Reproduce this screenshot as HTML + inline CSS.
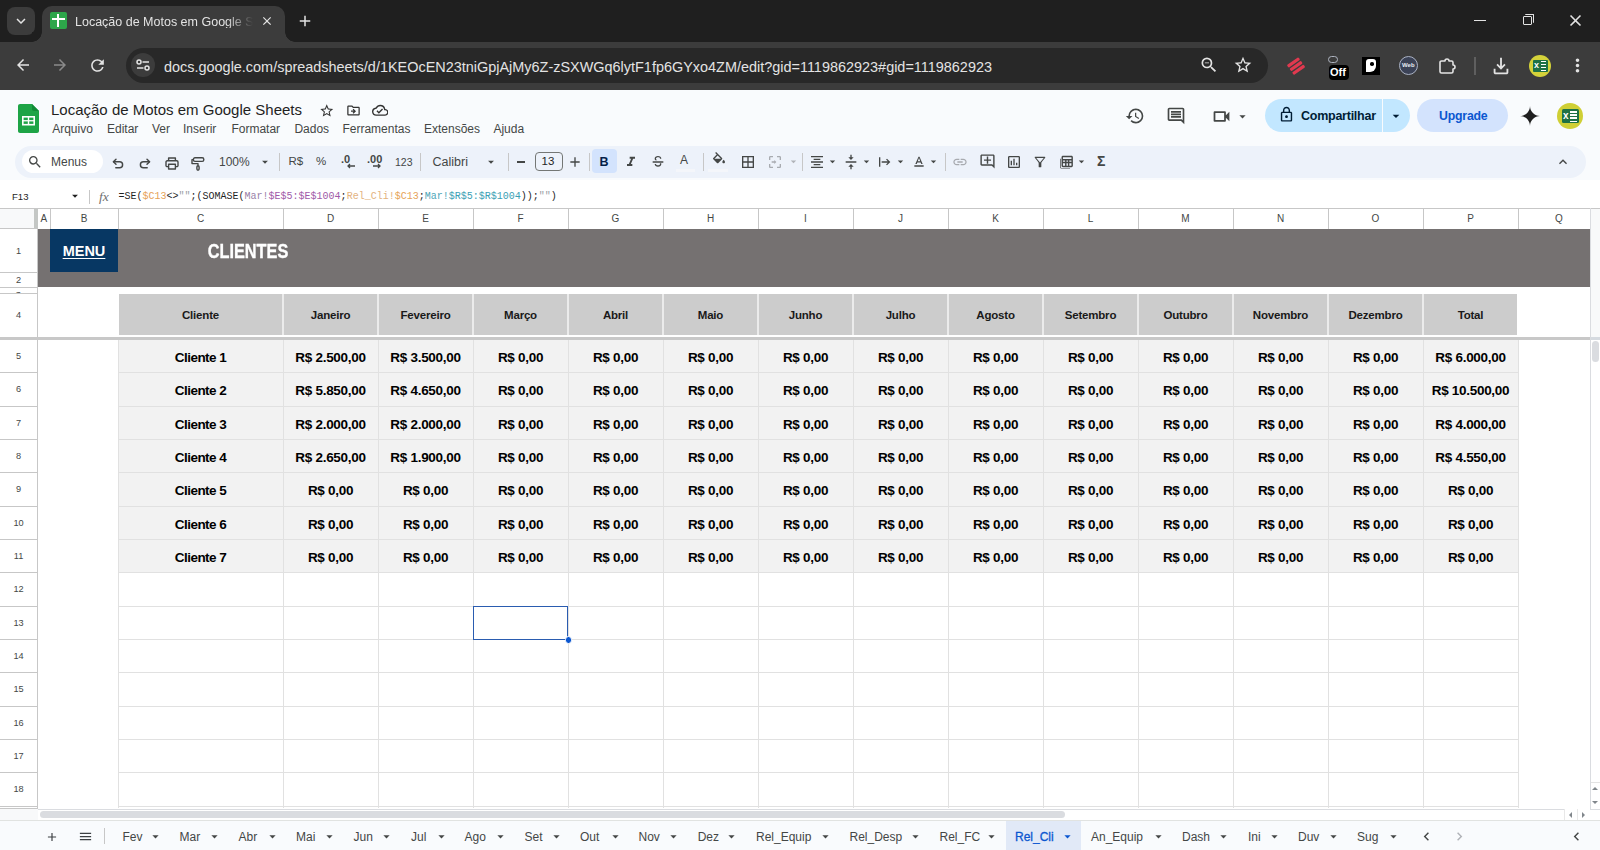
<!DOCTYPE html>
<html><head><meta charset="utf-8"><title>Locação de Motos em Google Sheets</title>
<style>
*{margin:0;padding:0;box-sizing:border-box}
html,body{width:1600px;height:850px;overflow:hidden;background:#fff;font-family:"Liberation Sans",sans-serif}
.t{position:absolute;white-space:nowrap;line-height:1}
.b{position:absolute}
svg{position:absolute;display:block}
.mono{font-family:"Liberation Mono",monospace}
</style></head><body>

<div class="b" style="left:0px;top:0px;width:1600px;height:42px;background:#1f1f1f"></div>
<div class="b" style="left:7px;top:7px;width:28px;height:28px;background:#3c3c3c;border-radius:8px"></div>
<svg style="position:absolute;left:12px;top:12px;width:18px;height:18px" viewBox="0 0 24 24"><path fill="#e3e3e3" d="M16.59 8.59L12 13.17 7.41 8.59 6 10l6 6 6-6z"/></svg>
<div class="b" style="left:42px;top:6px;width:243px;height:40px;background:#3c3c3c;border-radius:10px 10px 0 0"></div>
<div class="b" style="left:32px;top:32px;width:10px;height:10px;background:radial-gradient(circle at 0 0,#1f1f1f 9.5px,#3c3c3c 10px)"></div>
<div class="b" style="left:285px;top:32px;width:10px;height:10px;background:radial-gradient(circle at 100% 0,#1f1f1f 9.5px,#3c3c3c 10px)"></div>
<div class="b" style="left:50px;top:12px;width:17px;height:17px;background:#2da64a;border-radius:2px"></div>
<div class="b" style="left:57px;top:14px;width:2.2px;height:13px;background:#fff"></div>
<div class="b" style="left:52px;top:18px;width:13px;height:2.2px;background:#fff"></div>
<div class="t" style="left:75px;top:15.5px;font-size:12.5px;color:#e3e3e3;width:178px;overflow:hidden;-webkit-mask-image:linear-gradient(90deg,#000 85%,transparent)">Locação de Motos em Google Sheets</div>
<svg style="position:absolute;left:259.8px;top:14px;width:14px;height:14px" viewBox="0 0 24 24"><path fill="#e3e3e3" d="M19 6.41L17.59 5 12 10.59 6.41 5 5 6.41 10.59 12 5 17.59 6.41 19 12 13.59 17.59 19 19 17.59 13.41 12z"/></svg>
<svg style="position:absolute;left:296px;top:12px;width:18px;height:18px" viewBox="0 0 24 24"><path fill="#e3e3e3" d="M19 13h-6v6h-2v-6H5v-2h6V5h2v6h6v2z"/></svg>
<div class="b" style="left:1474px;top:20px;width:12px;height:1.3px;background:#e3e3e3"></div>
<div class="b" style="left:1523px;top:16px;width:9px;height:9px;border:1.2px solid #e3e3e3;border-radius:1px"></div>
<div class="b" style="left:1525px;top:14px;width:9px;height:9px;border-top:1.2px solid #e3e3e3;border-right:1.2px solid #e3e3e3;border-radius:1px"></div>
<svg style="position:absolute;left:1566px;top:11px;width:19px;height:19px" viewBox="0 0 24 24"><path fill="#e3e3e3" d="M19 6.41L17.59 5 12 10.59 6.41 5 5 6.41 10.59 12 5 17.59 6.41 19 12 13.59 17.59 19 19 17.59 13.41 12z"/></svg>
<div class="b" style="left:0px;top:42px;width:1600px;height:48px;background:#3c3c3c"></div>
<svg style="position:absolute;left:14px;top:56px;width:18px;height:18px" viewBox="0 0 24 24"><path fill="#e3e3e3" d="M20 11H7.83l5.59-5.59L12 4l-8 8 8 8 1.41-1.41L7.830 13H20v-2z"/></svg>
<svg style="position:absolute;left:51px;top:56px;width:18px;height:18px" viewBox="0 0 24 24"><path fill="#8a8a8a" d="M12 4l-1.41 1.41L16.17 11H4v2h12.17l-5.58 5.59L12 20l8-8z"/></svg>
<svg style="position:absolute;left:88px;top:56px;width:19px;height:19px" viewBox="0 0 24 24"><path fill="#e3e3e3" d="M17.65 6.35A7.958 7.958 0 0 0 12 4c-4.42 0-7.99 3.58-7.99 8s3.57 8 7.99 8c3.73 0 6.84-2.55 7.73-6h-2.08A5.99 5.99 0 0 1 12 18c-3.31 0-6-2.69-6-6s2.69-6 6-6c1.66 0 3.14.69 4.22 1.78L13 11h7V4l-2.35 2.35z"/></svg>
<div class="b" style="left:126px;top:48px;width:1142px;height:35px;background:#282828;border-radius:18px"></div>
<div class="b" style="left:131px;top:53px;width:24px;height:24px;background:#3c3c3c;border-radius:12px"></div>
<svg style="left:135px;top:57px;width:16px;height:16px" viewBox="0 0 16 16"><g stroke="#e3e3e3" stroke-width="1.5" fill="none"><circle cx="4" cy="5" r="2"/><path d="M7.5 5h6.5M2 11h6.5"/><circle cx="12" cy="11" r="2"/></g></svg>
<div class="t" style="left:164px;top:59.5px;font-size:14.45px;color:#e3e3e3">docs.google.com/spreadsheets/d/1KEOcEN23tniGpjAjMy6Z-zSXWGq6lytF1fp6GYxo4ZM/edit?gid=1119862923#gid=1119862923</div>
<svg style="position:absolute;left:1199px;top:55px;width:20px;height:20px" viewBox="0 0 24 24"><path fill="#e3e3e3" d="M15.5 14h-.79l-.28-.27A6.471 6.471 0 0 0 16 9.5 6.5 6.5 0 1 0 9.5 16c1.61 0 3.09-.59 4.23-1.57l.27.28v.79l5 4.99L20.49 19l-4.99-5zm-6 0C7.01 14 5 11.99 5 9.5S7.01 5 9.5 5 14 7.01 14 9.5 11.99 14 9.5 14zM7 9h5v1H7z"/></svg>
<svg style="position:absolute;left:1233px;top:55px;width:20px;height:20px" viewBox="0 0 24 24"><path fill="#e3e3e3" d="M22 9.24l-7.19-.62L12 2 9.19 8.63 2 9.24l5.46 4.73L5.82 21 12 17.270 18.18 21l-1.63-7.03L22 9.24zM12 15.4l-3.76 2.27 1-4.28-3.32-2.88 4.38-.38L12 6.1l1.71 4.04 4.38.38-3.32 2.88 1 4.28L12 15.4z"/></svg>
<svg style="left:1286px;top:56px;width:20px;height:20px" viewBox="0 0 20 20"><g fill="#e0394f" transform="rotate(-35 10 10)"><rect x="3" y="4" width="14" height="3.2" rx="1"/><rect x="3" y="8.5" width="14" height="3.2" rx="1"/><rect x="3" y="13" width="14" height="3.2" rx="1"/></g></svg>
<div class="b" style="left:1328px;top:56px;width:10px;height:7px;border:1.3px solid #aeb4c0;border-radius:4px"></div>
<div class="b" style="left:1329px;top:65px;width:20px;height:15px;background:#000;border-radius:4px"></div>
<div class="t" style="left:1330px;top:67px;font-size:11px;font-weight:bold;color:#fff">Off</div>
<div class="b" style="left:1362px;top:57px;width:18px;height:18px;background:#000"></div>
<div class="b" style="left:1366px;top:59px;width:10px;height:13px;background:#fff;border-radius:3px 3px 6px 0"></div>
<div class="b" style="left:1370px;top:62px;width:3.5px;height:3.5px;background:#000;border-radius:50%"></div>
<div class="b" style="left:1399px;top:56px;width:19px;height:19px;border-radius:50%;background:#3b4256;border:1.5px solid #aab2c4"></div>
<div class="t" style="left:1402px;top:61.5px;font-size:6px;font-weight:bold;color:#e8ecf4">Web</div>
<svg style="left:1437px;top:56px;width:20px;height:20px" viewBox="0 0 20 20"><path d="M3 6.5a1.5 1.5 0 0 1 1.5-1.5H8a2 2 0 0 1 4 0H14.5a1.5 1.5 0 0 1 1.5 1.5V9a2 2 0 0 1 0 4V15.5a1.5 1.5 0 0 1-1.5 1.5H4.5A1.5 1.5 0 0 1 3 15.5z" stroke="#e3e3e3" stroke-width="1.6" fill="none" stroke-linejoin="round"/></svg>
<div class="b" style="left:1474px;top:57px;width:1.5px;height:18px;background:#5f5f5f"></div>
<svg style="position:absolute;left:1490px;top:55px;width:22px;height:22px" viewBox="0 0 24 24"><path fill="#e3e3e3" d="M12 16l-5-5 1.41-1.41L11 12.17V3h2v9.17l2.59-2.58L17 11l-5 5zM4 15h2v4h12v-4h2v4c0 1.1-.9 2-2 2H6c-1.1 0-2-.9-2-2v-4z"/></svg>
<div class="b" style="left:1529px;top:55px;width:22px;height:22px;border-radius:50%;background:#d4d23a"></div>
<div class="b" style="left:1533px;top:60px;width:15px;height:12px;background:#1e7145;border-radius:1px"></div>
<div class="t" style="left:1534px;top:61px;font-size:9px;font-weight:bold;color:#fff">x</div>
<div class="b" style="left:1541px;top:61px;width:5px;height:10px;background:repeating-linear-gradient(#fff 0 1.5px,#1e7145 1.5px 3px)"></div>
<svg style="position:absolute;left:1566.5px;top:54.5px;width:21px;height:21px" viewBox="0 0 24 24"><path fill="#e3e3e3" d="M12 8c1.1 0 2-.9 2-2s-.9-2-2-2-2 .9-2 2 .9 2 2 2zm0 2c-1.1 0-2 .9-2 2s.9 2 2 2 2-.9 2-2-.9-2-2-2zm0 6c-1.1 0-2 .9-2 2s.9 2 2 2 2-.9 2-2-.9-2-2-2z"/></svg>
<div class="b" style="left:0px;top:90px;width:1600px;height:118px;background:#f9fbfd"></div>
<svg style="left:18px;top:104px;width:21px;height:29px" viewBox="0 0 21 29"><path fill="#1ea446" d="M2 0h12l7 7v20c0 1.1-.9 2-2 2H2c-1.1 0-2-.9-2-2V2C0 .9.9 0 2 0z"/><path fill="#118a37" d="M14 0l7 7h-5c-1.1 0-2-.9-2-2z"/><rect x="4" y="12" width="13" height="9.5" fill="#fff"/><rect x="5.6" y="13.6" width="4.2" height="2.5" fill="#1ea446"/><rect x="11.2" y="13.6" width="4.2" height="2.5" fill="#1ea446"/><rect x="5.6" y="17.4" width="4.2" height="2.5" fill="#1ea446"/><rect x="11.2" y="17.4" width="4.2" height="2.5" fill="#1ea446"/></svg>
<div class="t" style="left:51px;top:101.5px;font-size:15px;color:#1f1f1f">Locação de Motos em Google Sheets</div>
<svg style="position:absolute;left:318.5px;top:102.5px;width:15.5px;height:15.5px" viewBox="0 0 24 24"><path fill="#333" d="M22 9.24l-7.19-.62L12 2 9.19 8.63 2 9.24l5.46 4.73L5.82 21 12 17.270 18.18 21l-1.63-7.03L22 9.24zM12 15.4l-3.76 2.27 1-4.28-3.32-2.88 4.38-.38L12 6.1l1.71 4.04 4.38.38-3.32 2.88 1 4.28L12 15.4z"/></svg>
<svg style="position:absolute;left:345.5px;top:102.5px;width:15px;height:15px" viewBox="0 0 24 24"><path fill="#333" d="M20 6h-8l-2-2H4c-1.1 0-1.99.9-1.99 2L2 18c0 1.1.9 2 2 2h16c1.1 0 2-.9 2-2V8c0-1.1-.9-2-2-2zm0 12H4V6h5.17l2 2H20v10zm-7.84-6H8v2h4.16l-1.59 1.59L11.99 17 16 13.01 11.99 9l-1.41 1.41L12.16 12z"/></svg>
<svg style="position:absolute;left:371.5px;top:102px;width:16.5px;height:16.5px" viewBox="0 0 24 24"><path fill="#333" d="M19.35 10.04A7.49 7.49 0 0 0 12 4C9.11 4 6.6 5.64 5.35 8.04A5.994 5.994 0 0 0 0 14c0 3.31 2.69 6 6 6h13c2.76 0 5-2.24 5-5 0-2.64-2.05-4.78-4.65-4.96zM19 18H6c-2.21 0-4-1.79-4-4 0-2.05 1.53-3.76 3.56-3.97l1.07-.11.5-.95A5.469 5.469 0 0 1 12 6c2.62 0 4.88 1.86 5.39 4.43l.3 1.5 1.53.11A2.98 2.98 0 0 1 22 15c0 1.65-1.35 3-3 3zm-9-3.82l-2.09-2.09L6.5 13.5 10 17l6.01-6.01-1.41-1.41z"/></svg>
<div class="t " style="left:52.2px;top:123px;font-size:12px;color:#444746">Arquivo</div>
<div class="t " style="left:107px;top:123px;font-size:12px;color:#444746">Editar</div>
<div class="t " style="left:152px;top:123px;font-size:12px;color:#444746">Ver</div>
<div class="t " style="left:183px;top:123px;font-size:12px;color:#444746">Inserir</div>
<div class="t " style="left:231.4px;top:123px;font-size:12px;color:#444746">Formatar</div>
<div class="t " style="left:294.4px;top:123px;font-size:12px;color:#444746">Dados</div>
<div class="t " style="left:342.4px;top:123px;font-size:12px;color:#444746">Ferramentas</div>
<div class="t " style="left:424px;top:123px;font-size:12px;color:#444746">Extensões</div>
<div class="t " style="left:493.4px;top:123px;font-size:12px;color:#444746">Ajuda</div>
<svg style="position:absolute;left:1125px;top:106px;width:20px;height:20px" viewBox="0 0 24 24"><path fill="#444746" d="M13 3a9 9 0 0 0-9 9H1l3.89 3.89.07.14L9 12H6c0-3.87 3.13-7 7-7s7 3.13 7 7-3.13 7-7 7c-1.930 0-3.68-.79-4.94-2.06l-1.42 1.42A8.954 8.954 0 0 0 13 21a9 9 0 0 0 0-18zm-1 5v5l4.28 2.54.72-1.21-3.5-2.08V8H12z"/></svg>
<svg style="position:absolute;left:1166px;top:106px;width:20px;height:20px" viewBox="0 0 24 24"><path fill="#444746" d="M21.99 4c0-1.1-.89-2-1.99-2H4c-1.1 0-2 .9-2 2v12c0 1.1.9 2 2 2h14l4 4-.01-18zM20 4v13.17L18.83 16H4V4h16zM6 12h12v2H6zm0-3h12v2H6zm0-3h12v2H6z"/></svg>
<svg style="position:absolute;left:1211px;top:106px;width:21px;height:21px" viewBox="0 0 24 24"><path fill="#444746" d="M15 8v8H5V8h10m1-2H4c-.55 0-1 .45-1 1v10c0 .55.45 1 1 1h12c.55 0 1-.45 1-1v-3.5l4 4v-11l-4 4V7c0-.55-.45-1-1-1z"/></svg>
<svg style="position:absolute;left:1235px;top:109px;width:15px;height:15px" viewBox="0 0 24 24"><path fill="#444746" d="M7 10l5 5 5-5z"/></svg>
<div class="b" style="left:1265px;top:99px;width:145.3px;height:33px;background:#c2e7ff;border-radius:17px"></div>
<div class="b" style="left:1382px;top:99px;width:1px;height:33px;background:#f9fbfd"></div>
<svg style="position:absolute;left:1278px;top:106px;width:17px;height:17px" viewBox="0 0 24 24"><path fill="#001d35" d="M18 8h-1V6c0-2.76-2.24-5-5-5S7 3.24 7 6v2H6c-1.1 0-2 .9-2 2v10c0 1.1.9 2 2 2h12c1.1 0 2-.9 2-2V10c0-1.1-.9-2-2-2zM9 6c0-1.66 1.34-3 3-3s3 1.34 3 3v2H9V6zm9 14H6V10h12v10zm-6-3c1.1 0 2-.9 2-2s-.9-2-2-2-2 .9-2 2 .9 2 2 2z"/></svg>
<div class="t " style="left:1301px;top:109.5px;font-size:12.5px;color:#001d35;font-weight:bold;letter-spacing:-0.25px">Compartilhar</div>
<svg style="position:absolute;left:1388px;top:108px;width:16px;height:16px" viewBox="0 0 24 24"><path fill="#001d35" d="M7 10l5 5 5-5z"/></svg>
<div class="b" style="left:1417px;top:99px;width:90.8px;height:33px;background:#d3e3fd;border-radius:17px"></div>
<div class="t " style="left:1439px;top:109.5px;font-size:12.3px;color:#0b57d0;font-weight:bold;letter-spacing:-0.2px">Upgrade</div>
<svg style="position:absolute;left:1518px;top:104px;width:24px;height:24px" viewBox="0 0 24 24"><path fill="#1f1f1f" d="M12 2C12 7.5 16.5 12 22 12 16.5 12 12 16.5 12 22 12 16.5 7.5 12 2 12 7.5 12 12 7.5 12 2z"/></svg>
<div class="b" style="left:1557px;top:103px;width:26px;height:26px;border-radius:50%;background:#cfcf35"></div>
<div class="b" style="left:1561.5px;top:109px;width:17px;height:14px;background:#1e7145;border-radius:1.5px"></div>
<div class="t" style="left:1563px;top:111px;font-size:10px;font-weight:bold;color:#fff">x</div>
<div class="b" style="left:1570px;top:110.5px;width:6.5px;height:11px;background:repeating-linear-gradient(#fff 0 1.6px,#1e7145 1.6px 3.2px)"></div>
<div class="b" style="left:15px;top:146px;width:1571px;height:31.5px;background:#edf2fa;border-radius:16px"></div>
<div class="b" style="left:21.6px;top:150.3px;width:81.4px;height:22.5px;background:#fff;border-radius:12px"></div>
<svg style="position:absolute;left:27px;top:154px;width:16px;height:16px" viewBox="0 0 24 24"><path fill="#444746" d="M15.5 14h-.79l-.28-.27A6.471 6.471 0 0 0 16 9.5 6.5 6.5 0 1 0 9.5 16c1.61 0 3.09-.59 4.23-1.57l.27.28v.79l5 4.99L20.49 19l-4.99-5zm-6 0C7.01 14 5 11.99 5 9.5S7.01 5 9.5 5 14 7.01 14 9.5 11.99 14 9.5 14z"/></svg>
<div class="t " style="left:51px;top:155.5px;font-size:12px;color:#444746">Menus</div>
<svg style="left:112px;top:157.5px;width:12px;height:11px" viewBox="0 0 12 11"><g stroke="#444746" stroke-width="1.45" fill="none" stroke-linecap="round" stroke-linejoin="round"><path d="M4 1.2L1.4 3.7 4 6.2"/><path d="M1.6 3.7H7.6a3 3 0 0 1 0 6H3.8"/></g></svg>
<svg style="left:139px;top:157.5px;width:12px;height:11px" viewBox="0 0 12 11"><g stroke="#444746" stroke-width="1.45" fill="none" stroke-linecap="round" stroke-linejoin="round"><path d="M8 1.2L10.6 3.7 8 6.2"/><path d="M10.4 3.7H4.4a3 3 0 0 0 0 6H8.2"/></g></svg>
<svg style="left:164.5px;top:156.5px;width:14px;height:13px" viewBox="0 0 14 13"><g stroke="#444746" stroke-width="1.4" fill="none" stroke-linejoin="round"><path d="M3.6 3.8V1H10.4V3.8"/><path d="M3.4 9.6H2.2A1.2 1.2 0 0 1 1 8.4V5A1.2 1.2 0 0 1 2.2 3.8H11.8A1.2 1.2 0 0 1 13 5V8.4A1.2 1.2 0 0 1 11.8 9.6H10.6"/><rect x="3.6" y="7.2" width="6.8" height="4.8"/></g></svg>
<svg style="left:190.5px;top:156.5px;width:14px;height:14px" viewBox="0 0 14 14"><g stroke="#444746" stroke-width="1.4" fill="none" stroke-linejoin="round"><rect x="2.4" y="0.8" width="10.4" height="3.6" rx="1.6"/><path d="M2.4 2.6H1V6.6H7V8.6"/><rect x="5.9" y="8.8" width="2.2" height="4.4" rx="1.1"/></g></svg>
<div class="t " style="left:219px;top:156px;font-size:12px;color:#444746">100%</div>
<svg style="position:absolute;left:258px;top:155px;width:14px;height:14px" viewBox="0 0 24 24"><path fill="#444746" d="M7 10l5 5 5-5z"/></svg>
<div class="b" style="left:278.5px;top:153px;width:1px;height:18px;background:#c7c7c7"></div>
<div class="t " style="left:288.5px;top:156px;font-size:11.5px;color:#444746">R$</div>
<div class="t " style="left:316px;top:156px;font-size:11.5px;color:#444746">%</div>
<div class="t " style="left:341px;top:154px;font-size:11px;color:#444746;font-weight:bold">.0</div>
<svg style="left:346px;top:163px;width:10px;height:6px" viewBox="0 0 10 6"><path d="M9 3H2M4 1L2 3l2 2" stroke="#444746" stroke-width="1.3" fill="none"/></svg>
<div class="t " style="left:367px;top:154px;font-size:11px;color:#444746;font-weight:bold">.00</div>
<svg style="left:372px;top:163px;width:10px;height:6px" viewBox="0 0 10 6"><path d="M1 3h7M6 1l2 2-2 2" stroke="#444746" stroke-width="1.3" fill="none"/></svg>
<div class="t " style="left:395px;top:157px;font-size:10.5px;color:#444746">123</div>
<div class="b" style="left:419.5px;top:153px;width:1px;height:18px;background:#c7c7c7"></div>
<div class="t " style="left:432.5px;top:155.5px;font-size:12.5px;color:#444746">Calibri</div>
<svg style="position:absolute;left:484px;top:155px;width:14px;height:14px" viewBox="0 0 24 24"><path fill="#444746" d="M7 10l5 5 5-5z"/></svg>
<div class="b" style="left:508px;top:153px;width:1px;height:18px;background:#c7c7c7"></div>
<div class="b" style="left:517px;top:161.3px;width:7.5px;height:1.4px;background:#444746"></div>
<div class="b" style="left:534.5px;top:151.6px;width:28.2px;height:19.6px;border:1px solid #747775;border-radius:4px"></div>
<div class="t " style="left:541.5px;top:156px;font-size:11.5px;color:#1f1f1f">13</div>
<svg style="position:absolute;left:567px;top:154px;width:16px;height:16px" viewBox="0 0 24 24"><path fill="#444746" d="M19 13h-6v6h-2v-6H5v-2h6V5h2v6h6v2z"/></svg>
<div class="b" style="left:588.5px;top:153px;width:1px;height:18px;background:#c7c7c7"></div>
<div class="b" style="left:592px;top:149px;width:25px;height:24px;background:#d3e3fd;border-radius:4px"></div>
<div class="t " style="left:599.5px;top:155.5px;font-size:12.5px;color:#041e49;font-weight:bold">B</div>
<svg style="position:absolute;left:623px;top:154px;width:16px;height:16px" viewBox="0 0 24 24"><path fill="#444746" d="M10 4v3h2.21l-3.42 8H6v3h8v-3h-2.21l3.42-8H18V4z"/></svg>
<svg style="position:absolute;left:650px;top:154px;width:16px;height:16px" viewBox="0 0 24 24"><path fill="#444746" d="M4 11h16v2H4zM12 3c-2.9 0-5 1.6-5 4 0 .9.3 1.6.8 2.2h2.9C9.6 8.7 9 8 9 7c0-1.1 1.2-2 3-2s3 .8 3 2h2c0-2.4-2.1-4-5-4zm2.6 11c.3.3.4.7.4 1 0 1.1-1.2 2-3 2s-3-.9-3-2H7c0 2.4 2.1 4 5 4s5-1.6 5-4c0-.4-.1-.7-.2-1z"/></svg>
<div class="t" style="left:680px;top:154px;font-size:12px;color:#444746">A</div>
<div class="b" style="left:676px;top:169px;width:19px;height:2.5px;background:#f4f6fa"></div>
<div class="b" style="left:702.5px;top:153px;width:1px;height:18px;background:#c7c7c7"></div>
<svg style="position:absolute;left:711px;top:152px;width:16px;height:16px" viewBox="0 0 24 24"><path fill="#444746" d="M16.56 8.94L7.62 0 6.21 1.41l2.38 2.38-5.15 5.15a1.49 1.49 0 0 0 0 2.12l5.5 5.5c.29.29.68.44 1.06.44s.77-.15 1.06-.44l5.5-5.5c.59-.58.59-1.53 0-2.12zM5.21 10L10 5.21 14.79 10H5.21zM19 11.5s-2 2.17-2 3.5c0 1.1.9 2 2 2s2-.9 2-2c0-1.33-2-3.5-2-3.5z"/></svg>
<div class="b" style="left:708px;top:169px;width:20px;height:2.5px;background:#f4f6fa"></div>
<svg style="position:absolute;left:740px;top:154px;width:16px;height:16px" viewBox="0 0 24 24"><path fill="#444746" d="M3 3v18h18V3H3zm8 16H5v-6h6v6zm0-8H5V5h6v6zm8 8h-6v-6h6v6zm0-8h-6V5h6v6z"/></svg>
<svg style="position:absolute;left:767px;top:154px;width:16px;height:16px" viewBox="0 0 24 24"><path fill="#a8abb0" d="M3 5v4h2V5h4V3H5c-1.1 0-2 .9-2 2zm2 10H3v4c0 1.1.9 2 2 2h4v-2H5v-4zm14 4h-4v2h4c1.1 0 2-.9 2-2v-4h-2v4zm0-16h-4v2h4v4h2V5c0-1.1-.9-2-2-2zM7 11h4v-2l3 3-3 3v-2H7z"/></svg>
<svg style="position:absolute;left:787px;top:155px;width:13px;height:13px" viewBox="0 0 24 24"><path fill="#b0b3b8" d="M7 10l5 5 5-5z"/></svg>
<div class="b" style="left:802px;top:153px;width:1px;height:18px;background:#c7c7c7"></div>
<svg style="position:absolute;left:809px;top:154px;width:16px;height:16px" viewBox="0 0 24 24"><path fill="#444746" d="M7 15v2h10v-2H7zm-4 6h18v-2H3v2zm0-8h18v-2H3v2zm4-6v2h10V7H7zM3 3v2h18V3H3z"/></svg>
<svg style="position:absolute;left:826px;top:155px;width:13px;height:13px" viewBox="0 0 24 24"><path fill="#444746" d="M7 10l5 5 5-5z"/></svg>
<svg style="position:absolute;left:843px;top:154px;width:16px;height:16px" viewBox="0 0 24 24"><path fill="#444746" d="M8 19h3v4h2v-4h3l-4-4-4 4zm8-14h-3V1h-2v4H8l4 4 4-4zM4 11v2h16v-2H4z"/></svg>
<svg style="position:absolute;left:860px;top:155px;width:13px;height:13px" viewBox="0 0 24 24"><path fill="#444746" d="M7 10l5 5 5-5z"/></svg>
<svg style="position:absolute;left:877px;top:154px;width:16px;height:16px" viewBox="0 0 24 24"><path fill="#444746" d="M3 5h2v14H3zM7 11h9.2l-2.6-2.6L15 7l5 5-5 5-1.4-1.4 2.6-2.6H7z"/></svg>
<svg style="position:absolute;left:894px;top:155px;width:13px;height:13px" viewBox="0 0 24 24"><path fill="#444746" d="M7 10l5 5 5-5z"/></svg>
<svg style="position:absolute;left:911px;top:154px;width:16px;height:16px" viewBox="0 0 24 24"><path fill="#444746" d="M5 17h14v2H5zm4.5-4.2h5l.9 2.2h2.1L12.75 4h-1.5L6.5 15h2.1l.9-2.2zM12 6l1.87 5h-3.74L12 6z"/></svg>
<svg style="position:absolute;left:927px;top:155px;width:13px;height:13px" viewBox="0 0 24 24"><path fill="#444746" d="M7 10l5 5 5-5z"/></svg>
<div class="b" style="left:944.5px;top:153px;width:1px;height:18px;background:#c7c7c7"></div>
<svg style="position:absolute;left:952px;top:154px;width:16px;height:16px" viewBox="0 0 24 24"><path fill="#a8abb0" d="M3.9 12c0-1.71 1.39-3.1 3.1-3.1h4V7H7c-2.76 0-5 2.24-5 5s2.24 5 5 5h4v-1.9H7c-1.71 0-3.1-1.39-3.1-3.1zM8 13h8v-2H8v2zm9-6h-4v1.9h4c1.71 0 3.1 1.39 3.1 3.1s-1.39 3.1-3.1 3.1h-4V17h4c2.76 0 5-2.24 5-5s-2.24-5-5-5z"/></svg>
<svg style="position:absolute;left:979px;top:153px;width:17px;height:17px" viewBox="0 0 24 24"><path fill="#444746" d="M22 4c0-1.1-.9-2-2-2H4c-1.1 0-2 .9-2 2v12c0 1.1.9 2 2 2h14l4 4V4zm-2 13.17L18.83 16H4V4h16v13.17zM13 5h-2v4H7v2h4v4h2v-4h4V9h-4z"/></svg>
<svg style="position:absolute;left:1006px;top:154px;width:16px;height:16px" viewBox="0 0 24 24"><path fill="#444746" d="M19 3H5c-1.1 0-2 .9-2 2v14c0 1.1.9 2 2 2h14c1.1 0 2-.9 2-2V5c0-1.1-.9-2-2-2zm0 16H5V5h14v14zM7 10h2v7H7zm4-3h2v10h-2zm4 6h2v4h-2z"/></svg>
<svg style="position:absolute;left:1032px;top:154px;width:16px;height:16px" viewBox="0 0 24 24"><path fill="#444746" d="M4.25 5.61C6.27 8.2 10 13 10 13v6c0 .55.45 1 1 1h2c.55 0 1-.45 1-1v-6s3.72-4.8 5.74-7.39A.998.998 0 0 0 18.950 4H5.04c-.83 0-1.3.95-.79 1.61zM6.4 6h11.2L12 12.9z"/></svg>
<svg style="position:absolute;left:1058px;top:153px;width:17px;height:17px" viewBox="0 0 24 24"><path fill="#444746" d="M7 4h12c1.1 0 2 .9 2 2v12c0 1.1-.9 2-2 2H7c-1.1 0-2-.9-2-2V6c0-1.1.9-2 2-2zm0 2v2.5h12V6H7zm0 4.5v2h3v-2H7zm5 0v2h2v-2h-2zm4 0v2h3v-2h-3zM7 14.5V18h3v-3.5H7zm5 0V18h2v-3.5h-2zm4 0V18h3v-3.5h-3zM3 8h1v12c0 .55.45 1 1 1h12v1H5c-1.1 0-2-.9-2-2V8z"/></svg>
<svg style="position:absolute;left:1075px;top:155px;width:13px;height:13px" viewBox="0 0 24 24"><path fill="#444746" d="M7 10l5 5 5-5z"/></svg>
<div class="t " style="left:1097px;top:154px;font-size:14px;color:#444746;font-weight:bold">&Sigma;</div>
<svg style="position:absolute;left:1555px;top:154px;width:16px;height:16px" viewBox="0 0 24 24"><path fill="#444746" d="M12 8l-6 6 1.41 1.41L12 10.83l4.59 4.58L18 14z"/></svg>
<div class="b" style="left:0px;top:180px;width:1600px;height:28px;background:#fff"></div>
<div class="t " style="left:12px;top:191.8px;font-size:9.6px;color:#1f1f1f">F13</div>
<svg style="position:absolute;left:68px;top:189px;width:14px;height:14px" viewBox="0 0 24 24"><path fill="#1f1f1f" d="M7 10l5 5 5-5z"/></svg>
<div class="b" style="left:88.5px;top:190px;width:1px;height:14px;background:#c7c7c7"></div>
<div class="t" style="left:99px;top:189.5px;font-size:13.5px;color:#6f6f6f;font-style:italic;font-family:Liberation Serif">fx</div>
<div class="t mono" style="left:118.5px;top:191.5px;font-size:10px;color:#1f1f1f">=SE(<span style="color:#e6a257">$C13</span>&lt;&gt;<span style="color:#9aa0a6">""</span>;(SOMASE(<span style="color:#9a7fa8">Mar!</span><span style="color:#a05aa8">$E$5:$E$1004</span>;<span style="color:#e3b27e">Rel_Cli!</span><span style="color:#e6a257">$C13</span>;<span style="color:#4fa6b8">Mar!</span><span style="color:#3aa0b4">$R$5:$R$1004</span>));<span style="color:#9aa0a6">""</span>)</div>
<div class="b" style="left:0px;top:208px;width:1590px;height:21px;background:#fff;border-top:1px solid #c7c7c7"></div>
<div class="b" style="left:0px;top:209px;width:34px;height:19.5px;background:#f8f9fa"></div>
<div class="b" style="left:34.2px;top:209px;width:3.6px;height:20px;background:#c4c7c5"></div>
<div class="b" style="left:0px;top:228.3px;width:37.5px;height:1px;background:#c7c7c7"></div>
<div class="t" style="left:37.5px;top:214.3px;width:12.5px;text-align:center;font-size:10px;color:#444746">A</div>
<div class="t" style="left:50px;top:214.3px;width:68.0px;text-align:center;font-size:10px;color:#444746">B</div>
<div class="b" style="left:49.5px;top:209px;width:1px;height:20px;background:#c7c7c7"></div>
<div class="t" style="left:118px;top:214.3px;width:165.0px;text-align:center;font-size:10px;color:#444746">C</div>
<div class="b" style="left:117.5px;top:209px;width:1px;height:20px;background:#c7c7c7"></div>
<div class="t" style="left:283px;top:214.3px;width:95.0px;text-align:center;font-size:10px;color:#444746">D</div>
<div class="b" style="left:282.5px;top:209px;width:1px;height:20px;background:#c7c7c7"></div>
<div class="t" style="left:378px;top:214.3px;width:95.0px;text-align:center;font-size:10px;color:#444746">E</div>
<div class="b" style="left:377.5px;top:209px;width:1px;height:20px;background:#c7c7c7"></div>
<div class="t" style="left:473px;top:214.3px;width:95.0px;text-align:center;font-size:10px;color:#444746">F</div>
<div class="b" style="left:472.5px;top:209px;width:1px;height:20px;background:#c7c7c7"></div>
<div class="t" style="left:568px;top:214.3px;width:95.0px;text-align:center;font-size:10px;color:#444746">G</div>
<div class="b" style="left:567.5px;top:209px;width:1px;height:20px;background:#c7c7c7"></div>
<div class="t" style="left:663px;top:214.3px;width:95.0px;text-align:center;font-size:10px;color:#444746">H</div>
<div class="b" style="left:662.5px;top:209px;width:1px;height:20px;background:#c7c7c7"></div>
<div class="t" style="left:758px;top:214.3px;width:95.0px;text-align:center;font-size:10px;color:#444746">I</div>
<div class="b" style="left:757.5px;top:209px;width:1px;height:20px;background:#c7c7c7"></div>
<div class="t" style="left:853px;top:214.3px;width:95.0px;text-align:center;font-size:10px;color:#444746">J</div>
<div class="b" style="left:852.5px;top:209px;width:1px;height:20px;background:#c7c7c7"></div>
<div class="t" style="left:948px;top:214.3px;width:95.0px;text-align:center;font-size:10px;color:#444746">K</div>
<div class="b" style="left:947.5px;top:209px;width:1px;height:20px;background:#c7c7c7"></div>
<div class="t" style="left:1043px;top:214.3px;width:95.0px;text-align:center;font-size:10px;color:#444746">L</div>
<div class="b" style="left:1042.5px;top:209px;width:1px;height:20px;background:#c7c7c7"></div>
<div class="t" style="left:1138px;top:214.3px;width:95.0px;text-align:center;font-size:10px;color:#444746">M</div>
<div class="b" style="left:1137.5px;top:209px;width:1px;height:20px;background:#c7c7c7"></div>
<div class="t" style="left:1233px;top:214.3px;width:95.0px;text-align:center;font-size:10px;color:#444746">N</div>
<div class="b" style="left:1232.5px;top:209px;width:1px;height:20px;background:#c7c7c7"></div>
<div class="t" style="left:1328px;top:214.3px;width:95.0px;text-align:center;font-size:10px;color:#444746">O</div>
<div class="b" style="left:1327.5px;top:209px;width:1px;height:20px;background:#c7c7c7"></div>
<div class="t" style="left:1423px;top:214.3px;width:95.0px;text-align:center;font-size:10px;color:#444746">P</div>
<div class="b" style="left:1422.5px;top:209px;width:1px;height:20px;background:#c7c7c7"></div>
<div class="t" style="left:1518px;top:214.3px;width:82px;text-align:center;font-size:10px;color:#444746">Q</div>
<div class="b" style="left:1517.5px;top:209px;width:1px;height:20px;background:#c7c7c7"></div>
<div class="b" style="left:1589.5px;top:209px;width:1px;height:20px;background:#c7c7c7"></div>
<div class="b" style="left:0px;top:229px;width:37.5px;height:580px;background:#fff"></div>
<div class="b" style="left:37px;top:229px;width:1px;height:580px;background:#c7c7c7"></div>
<div class="b" style="left:0px;top:271.9px;width:37px;height:1px;background:#c7c7c7"></div>
<div class="t" style="left:0;top:246.5px;width:37px;text-align:center;font-size:9.2px;color:#444746">1</div>
<div class="b" style="left:0px;top:286.8px;width:37px;height:1px;background:#c7c7c7"></div>
<div class="t" style="left:0;top:275.65000000000003px;width:37px;text-align:center;font-size:9.2px;color:#444746">2</div>
<div class="b" style="left:0px;top:292.9px;width:37px;height:1px;background:#c7c7c7"></div>
<div class="b" style="left:0;top:287.3px;width:37px;height:6.099999999999966px;overflow:hidden"><div class="t" style="left:0;top:3px;width:37px;text-align:center;font-size:9.5px;color:#444746">3</div></div>
<div class="t" style="left:0;top:310.75px;width:37px;text-align:center;font-size:9.2px;color:#444746">4</div>
<div class="b" style="left:0px;top:372.435px;width:37px;height:1px;background:#c7c7c7"></div>
<div class="t" style="left:0;top:352.06750000000005px;width:37px;text-align:center;font-size:9.2px;color:#444746">5</div>
<div class="b" style="left:0px;top:405.77px;width:37px;height:1px;background:#c7c7c7"></div>
<div class="t" style="left:0;top:385.4025px;width:37px;text-align:center;font-size:9.2px;color:#444746">6</div>
<div class="b" style="left:0px;top:439.10499999999996px;width:37px;height:1px;background:#c7c7c7"></div>
<div class="t" style="left:0;top:418.7375px;width:37px;text-align:center;font-size:9.2px;color:#444746">7</div>
<div class="b" style="left:0px;top:472.43999999999994px;width:37px;height:1px;background:#c7c7c7"></div>
<div class="t" style="left:0;top:452.07249999999993px;width:37px;text-align:center;font-size:9.2px;color:#444746">8</div>
<div class="b" style="left:0px;top:505.7749999999999px;width:37px;height:1px;background:#c7c7c7"></div>
<div class="t" style="left:0;top:485.40749999999997px;width:37px;text-align:center;font-size:9.2px;color:#444746">9</div>
<div class="b" style="left:0px;top:539.1099999999999px;width:37px;height:1px;background:#c7c7c7"></div>
<div class="t" style="left:0;top:518.7424999999998px;width:37px;text-align:center;font-size:9.2px;color:#444746">10</div>
<div class="b" style="left:0px;top:572.4449999999999px;width:37px;height:1px;background:#c7c7c7"></div>
<div class="t" style="left:0;top:552.0774999999999px;width:37px;text-align:center;font-size:9.2px;color:#444746">11</div>
<div class="b" style="left:0px;top:605.78px;width:37px;height:1px;background:#c7c7c7"></div>
<div class="t" style="left:0;top:585.4124999999999px;width:37px;text-align:center;font-size:9.2px;color:#444746">12</div>
<div class="b" style="left:0px;top:639.115px;width:37px;height:1px;background:#c7c7c7"></div>
<div class="t" style="left:0;top:618.7475px;width:37px;text-align:center;font-size:9.2px;color:#444746">13</div>
<div class="b" style="left:0px;top:672.45px;width:37px;height:1px;background:#c7c7c7"></div>
<div class="t" style="left:0;top:652.0825px;width:37px;text-align:center;font-size:9.2px;color:#444746">14</div>
<div class="b" style="left:0px;top:705.7850000000001px;width:37px;height:1px;background:#c7c7c7"></div>
<div class="t" style="left:0;top:685.4175px;width:37px;text-align:center;font-size:9.2px;color:#444746">15</div>
<div class="b" style="left:0px;top:739.1200000000001px;width:37px;height:1px;background:#c7c7c7"></div>
<div class="t" style="left:0;top:718.7525px;width:37px;text-align:center;font-size:9.2px;color:#444746">16</div>
<div class="b" style="left:0px;top:772.4550000000002px;width:37px;height:1px;background:#c7c7c7"></div>
<div class="t" style="left:0;top:752.0875000000001px;width:37px;text-align:center;font-size:9.2px;color:#444746">17</div>
<div class="b" style="left:0px;top:805.7900000000002px;width:37px;height:1px;background:#c7c7c7"></div>
<div class="t" style="left:0;top:785.4225000000001px;width:37px;text-align:center;font-size:9.2px;color:#444746">18</div>
<div class="b" style="left:0px;top:808.0px;width:37px;height:1px;background:#c7c7c7"></div>
<div class="b" style="left:37.5px;top:229px;width:1552.5px;height:58.3px;background:#757171"></div>
<div class="b" style="left:50px;top:229px;width:68px;height:43px;background:#073763"></div>
<div class="t" style="left:50px;top:243.5px;width:68px;text-align:center;font-size:14.5px;font-weight:bold;color:#fff;text-decoration:underline;text-decoration-thickness:1px;text-underline-offset:1.5px">MENU</div>
<div class="t" style="left:118px;top:242.1px;width:260px;text-align:center;font-size:19.5px;font-weight:bold;color:#fff;transform:scaleX(0.835);-webkit-text-stroke:0.35px #fff">CLIENTES</div>
<div class="b" style="left:37.5px;top:287.3px;width:1552.5px;height:6.1px;background:#fff"></div>
<div class="b" style="left:118.8px;top:294.2px;width:163.4px;height:41.3px;background:#cccccc"></div>
<div class="t" style="left:118px;top:310px;width:165px;text-align:center;font-size:11.5px;letter-spacing:-0.2px;font-weight:bold;color:#1a1a1a">Cliente</div>
<div class="b" style="left:283.8px;top:294.2px;width:93.4px;height:41.3px;background:#cccccc"></div>
<div class="t" style="left:283px;top:310px;width:95px;text-align:center;font-size:11.5px;letter-spacing:-0.2px;font-weight:bold;color:#1a1a1a">Janeiro</div>
<div class="b" style="left:378.8px;top:294.2px;width:93.4px;height:41.3px;background:#cccccc"></div>
<div class="t" style="left:378px;top:310px;width:95px;text-align:center;font-size:11.5px;letter-spacing:-0.2px;font-weight:bold;color:#1a1a1a">Fevereiro</div>
<div class="b" style="left:473.8px;top:294.2px;width:93.4px;height:41.3px;background:#cccccc"></div>
<div class="t" style="left:473px;top:310px;width:95px;text-align:center;font-size:11.5px;letter-spacing:-0.2px;font-weight:bold;color:#1a1a1a">Março</div>
<div class="b" style="left:568.8px;top:294.2px;width:93.4px;height:41.3px;background:#cccccc"></div>
<div class="t" style="left:568px;top:310px;width:95px;text-align:center;font-size:11.5px;letter-spacing:-0.2px;font-weight:bold;color:#1a1a1a">Abril</div>
<div class="b" style="left:663.8px;top:294.2px;width:93.4px;height:41.3px;background:#cccccc"></div>
<div class="t" style="left:663px;top:310px;width:95px;text-align:center;font-size:11.5px;letter-spacing:-0.2px;font-weight:bold;color:#1a1a1a">Maio</div>
<div class="b" style="left:758.8px;top:294.2px;width:93.4px;height:41.3px;background:#cccccc"></div>
<div class="t" style="left:758px;top:310px;width:95px;text-align:center;font-size:11.5px;letter-spacing:-0.2px;font-weight:bold;color:#1a1a1a">Junho</div>
<div class="b" style="left:853.8px;top:294.2px;width:93.4px;height:41.3px;background:#cccccc"></div>
<div class="t" style="left:853px;top:310px;width:95px;text-align:center;font-size:11.5px;letter-spacing:-0.2px;font-weight:bold;color:#1a1a1a">Julho</div>
<div class="b" style="left:948.8px;top:294.2px;width:93.4px;height:41.3px;background:#cccccc"></div>
<div class="t" style="left:948px;top:310px;width:95px;text-align:center;font-size:11.5px;letter-spacing:-0.2px;font-weight:bold;color:#1a1a1a">Agosto</div>
<div class="b" style="left:1043.8px;top:294.2px;width:93.4px;height:41.3px;background:#cccccc"></div>
<div class="t" style="left:1043px;top:310px;width:95px;text-align:center;font-size:11.5px;letter-spacing:-0.2px;font-weight:bold;color:#1a1a1a">Setembro</div>
<div class="b" style="left:1138.8px;top:294.2px;width:93.4px;height:41.3px;background:#cccccc"></div>
<div class="t" style="left:1138px;top:310px;width:95px;text-align:center;font-size:11.5px;letter-spacing:-0.2px;font-weight:bold;color:#1a1a1a">Outubro</div>
<div class="b" style="left:1233.8px;top:294.2px;width:93.4px;height:41.3px;background:#cccccc"></div>
<div class="t" style="left:1233px;top:310px;width:95px;text-align:center;font-size:11.5px;letter-spacing:-0.2px;font-weight:bold;color:#1a1a1a">Novembro</div>
<div class="b" style="left:1328.8px;top:294.2px;width:93.4px;height:41.3px;background:#cccccc"></div>
<div class="t" style="left:1328px;top:310px;width:95px;text-align:center;font-size:11.5px;letter-spacing:-0.2px;font-weight:bold;color:#1a1a1a">Dezembro</div>
<div class="b" style="left:1423.8px;top:294.2px;width:93.4px;height:41.3px;background:#cccccc"></div>
<div class="t" style="left:1423px;top:310px;width:95px;text-align:center;font-size:11.5px;letter-spacing:-0.2px;font-weight:bold;color:#1a1a1a">Total</div>
<div class="b" style="left:282.2px;top:294.2px;width:1.6px;height:41.3px;background:#ebebeb"></div>
<div class="b" style="left:377.2px;top:294.2px;width:1.6px;height:41.3px;background:#ebebeb"></div>
<div class="b" style="left:472.2px;top:294.2px;width:1.6px;height:41.3px;background:#ebebeb"></div>
<div class="b" style="left:567.2px;top:294.2px;width:1.6px;height:41.3px;background:#ebebeb"></div>
<div class="b" style="left:662.2px;top:294.2px;width:1.6px;height:41.3px;background:#ebebeb"></div>
<div class="b" style="left:757.2px;top:294.2px;width:1.6px;height:41.3px;background:#ebebeb"></div>
<div class="b" style="left:852.2px;top:294.2px;width:1.6px;height:41.3px;background:#ebebeb"></div>
<div class="b" style="left:947.2px;top:294.2px;width:1.6px;height:41.3px;background:#ebebeb"></div>
<div class="b" style="left:1042.2px;top:294.2px;width:1.6px;height:41.3px;background:#ebebeb"></div>
<div class="b" style="left:1137.2px;top:294.2px;width:1.6px;height:41.3px;background:#ebebeb"></div>
<div class="b" style="left:1232.2px;top:294.2px;width:1.6px;height:41.3px;background:#ebebeb"></div>
<div class="b" style="left:1327.2px;top:294.2px;width:1.6px;height:41.3px;background:#ebebeb"></div>
<div class="b" style="left:1422.2px;top:294.2px;width:1.6px;height:41.3px;background:#ebebeb"></div>
<div class="b" style="left:0px;top:337px;width:1590px;height:3px;background:#c8c8c8"></div>
<div class="b" style="left:118px;top:339.6px;width:1400px;height:233.345px;background:#f2f2f2"></div>
<div class="b" style="left:118px;top:372.335px;width:1400px;height:1px;background:#e1e1e1"></div>
<div class="b" style="left:118px;top:405.67px;width:1400px;height:1px;background:#e1e1e1"></div>
<div class="b" style="left:118px;top:439.005px;width:1400px;height:1px;background:#e1e1e1"></div>
<div class="b" style="left:118px;top:472.34000000000003px;width:1400px;height:1px;background:#e1e1e1"></div>
<div class="b" style="left:118px;top:505.675px;width:1400px;height:1px;background:#e1e1e1"></div>
<div class="b" style="left:118px;top:539.01px;width:1400px;height:1px;background:#e1e1e1"></div>
<div class="b" style="left:118px;top:572.345px;width:1400px;height:1px;background:#e1e1e1"></div>
<div class="b" style="left:118px;top:605.68px;width:1400px;height:1px;background:#e1e1e1"></div>
<div class="b" style="left:118px;top:639.015px;width:1400px;height:1px;background:#e1e1e1"></div>
<div class="b" style="left:118px;top:672.35px;width:1400px;height:1px;background:#e1e1e1"></div>
<div class="b" style="left:118px;top:705.6850000000001px;width:1400px;height:1px;background:#e1e1e1"></div>
<div class="b" style="left:118px;top:739.02px;width:1400px;height:1px;background:#e1e1e1"></div>
<div class="b" style="left:118px;top:772.355px;width:1400px;height:1px;background:#e1e1e1"></div>
<div class="b" style="left:118px;top:805.6899999999999px;width:1400px;height:1px;background:#e1e1e1"></div>
<div class="b" style="left:117.5px;top:339.6px;width:1px;height:468.9px;background:#e1e1e1"></div>
<div class="b" style="left:282.5px;top:339.6px;width:1px;height:468.9px;background:#e1e1e1"></div>
<div class="b" style="left:377.5px;top:339.6px;width:1px;height:468.9px;background:#e1e1e1"></div>
<div class="b" style="left:472.5px;top:339.6px;width:1px;height:468.9px;background:#e1e1e1"></div>
<div class="b" style="left:567.5px;top:339.6px;width:1px;height:468.9px;background:#e1e1e1"></div>
<div class="b" style="left:662.5px;top:339.6px;width:1px;height:468.9px;background:#e1e1e1"></div>
<div class="b" style="left:757.5px;top:339.6px;width:1px;height:468.9px;background:#e1e1e1"></div>
<div class="b" style="left:852.5px;top:339.6px;width:1px;height:468.9px;background:#e1e1e1"></div>
<div class="b" style="left:947.5px;top:339.6px;width:1px;height:468.9px;background:#e1e1e1"></div>
<div class="b" style="left:1042.5px;top:339.6px;width:1px;height:468.9px;background:#e1e1e1"></div>
<div class="b" style="left:1137.5px;top:339.6px;width:1px;height:468.9px;background:#e1e1e1"></div>
<div class="b" style="left:1232.5px;top:339.6px;width:1px;height:468.9px;background:#e1e1e1"></div>
<div class="b" style="left:1327.5px;top:339.6px;width:1px;height:468.9px;background:#e1e1e1"></div>
<div class="b" style="left:1422.5px;top:339.6px;width:1px;height:468.9px;background:#e1e1e1"></div>
<div class="b" style="left:1517.5px;top:339.6px;width:1px;height:468.9px;background:#e1e1e1"></div>
<div class="t" style="left:118px;top:351.06750000000005px;width:165px;text-align:center;font-size:13.5px;font-weight:bold;color:#000;letter-spacing:-0.55px;">Cliente 1</div>
<div class="t" style="left:283px;top:351.06750000000005px;width:95px;text-align:center;font-size:13.5px;font-weight:bold;color:#000;letter-spacing:-0.3px;">R$ 2.500,00</div>
<div class="t" style="left:378px;top:351.06750000000005px;width:95px;text-align:center;font-size:13.5px;font-weight:bold;color:#000;letter-spacing:-0.3px;">R$ 3.500,00</div>
<div class="t" style="left:473px;top:351.06750000000005px;width:95px;text-align:center;font-size:13.5px;font-weight:bold;color:#000;letter-spacing:-0.3px;">R$ 0,00</div>
<div class="t" style="left:568px;top:351.06750000000005px;width:95px;text-align:center;font-size:13.5px;font-weight:bold;color:#000;letter-spacing:-0.3px;">R$ 0,00</div>
<div class="t" style="left:663px;top:351.06750000000005px;width:95px;text-align:center;font-size:13.5px;font-weight:bold;color:#000;letter-spacing:-0.3px;">R$ 0,00</div>
<div class="t" style="left:758px;top:351.06750000000005px;width:95px;text-align:center;font-size:13.5px;font-weight:bold;color:#000;letter-spacing:-0.3px;">R$ 0,00</div>
<div class="t" style="left:853px;top:351.06750000000005px;width:95px;text-align:center;font-size:13.5px;font-weight:bold;color:#000;letter-spacing:-0.3px;">R$ 0,00</div>
<div class="t" style="left:948px;top:351.06750000000005px;width:95px;text-align:center;font-size:13.5px;font-weight:bold;color:#000;letter-spacing:-0.3px;">R$ 0,00</div>
<div class="t" style="left:1043px;top:351.06750000000005px;width:95px;text-align:center;font-size:13.5px;font-weight:bold;color:#000;letter-spacing:-0.3px;">R$ 0,00</div>
<div class="t" style="left:1138px;top:351.06750000000005px;width:95px;text-align:center;font-size:13.5px;font-weight:bold;color:#000;letter-spacing:-0.3px;">R$ 0,00</div>
<div class="t" style="left:1233px;top:351.06750000000005px;width:95px;text-align:center;font-size:13.5px;font-weight:bold;color:#000;letter-spacing:-0.3px;">R$ 0,00</div>
<div class="t" style="left:1328px;top:351.06750000000005px;width:95px;text-align:center;font-size:13.5px;font-weight:bold;color:#000;letter-spacing:-0.3px;">R$ 0,00</div>
<div class="t" style="left:1423px;top:351.06750000000005px;width:95px;text-align:center;font-size:13.5px;font-weight:bold;color:#000;letter-spacing:-0.3px;">R$ 6.000,00</div>
<div class="t" style="left:118px;top:384.40250000000003px;width:165px;text-align:center;font-size:13.5px;font-weight:bold;color:#000;letter-spacing:-0.55px;">Cliente 2</div>
<div class="t" style="left:283px;top:384.40250000000003px;width:95px;text-align:center;font-size:13.5px;font-weight:bold;color:#000;letter-spacing:-0.3px;">R$ 5.850,00</div>
<div class="t" style="left:378px;top:384.40250000000003px;width:95px;text-align:center;font-size:13.5px;font-weight:bold;color:#000;letter-spacing:-0.3px;">R$ 4.650,00</div>
<div class="t" style="left:473px;top:384.40250000000003px;width:95px;text-align:center;font-size:13.5px;font-weight:bold;color:#000;letter-spacing:-0.3px;">R$ 0,00</div>
<div class="t" style="left:568px;top:384.40250000000003px;width:95px;text-align:center;font-size:13.5px;font-weight:bold;color:#000;letter-spacing:-0.3px;">R$ 0,00</div>
<div class="t" style="left:663px;top:384.40250000000003px;width:95px;text-align:center;font-size:13.5px;font-weight:bold;color:#000;letter-spacing:-0.3px;">R$ 0,00</div>
<div class="t" style="left:758px;top:384.40250000000003px;width:95px;text-align:center;font-size:13.5px;font-weight:bold;color:#000;letter-spacing:-0.3px;">R$ 0,00</div>
<div class="t" style="left:853px;top:384.40250000000003px;width:95px;text-align:center;font-size:13.5px;font-weight:bold;color:#000;letter-spacing:-0.3px;">R$ 0,00</div>
<div class="t" style="left:948px;top:384.40250000000003px;width:95px;text-align:center;font-size:13.5px;font-weight:bold;color:#000;letter-spacing:-0.3px;">R$ 0,00</div>
<div class="t" style="left:1043px;top:384.40250000000003px;width:95px;text-align:center;font-size:13.5px;font-weight:bold;color:#000;letter-spacing:-0.3px;">R$ 0,00</div>
<div class="t" style="left:1138px;top:384.40250000000003px;width:95px;text-align:center;font-size:13.5px;font-weight:bold;color:#000;letter-spacing:-0.3px;">R$ 0,00</div>
<div class="t" style="left:1233px;top:384.40250000000003px;width:95px;text-align:center;font-size:13.5px;font-weight:bold;color:#000;letter-spacing:-0.3px;">R$ 0,00</div>
<div class="t" style="left:1328px;top:384.40250000000003px;width:95px;text-align:center;font-size:13.5px;font-weight:bold;color:#000;letter-spacing:-0.3px;">R$ 0,00</div>
<div class="t" style="left:1423px;top:384.40250000000003px;width:95px;text-align:center;font-size:13.5px;font-weight:bold;color:#000;letter-spacing:-0.3px;">R$ 10.500,00</div>
<div class="t" style="left:118px;top:417.73750000000007px;width:165px;text-align:center;font-size:13.5px;font-weight:bold;color:#000;letter-spacing:-0.55px;">Cliente 3</div>
<div class="t" style="left:283px;top:417.73750000000007px;width:95px;text-align:center;font-size:13.5px;font-weight:bold;color:#000;letter-spacing:-0.3px;">R$ 2.000,00</div>
<div class="t" style="left:378px;top:417.73750000000007px;width:95px;text-align:center;font-size:13.5px;font-weight:bold;color:#000;letter-spacing:-0.3px;">R$ 2.000,00</div>
<div class="t" style="left:473px;top:417.73750000000007px;width:95px;text-align:center;font-size:13.5px;font-weight:bold;color:#000;letter-spacing:-0.3px;">R$ 0,00</div>
<div class="t" style="left:568px;top:417.73750000000007px;width:95px;text-align:center;font-size:13.5px;font-weight:bold;color:#000;letter-spacing:-0.3px;">R$ 0,00</div>
<div class="t" style="left:663px;top:417.73750000000007px;width:95px;text-align:center;font-size:13.5px;font-weight:bold;color:#000;letter-spacing:-0.3px;">R$ 0,00</div>
<div class="t" style="left:758px;top:417.73750000000007px;width:95px;text-align:center;font-size:13.5px;font-weight:bold;color:#000;letter-spacing:-0.3px;">R$ 0,00</div>
<div class="t" style="left:853px;top:417.73750000000007px;width:95px;text-align:center;font-size:13.5px;font-weight:bold;color:#000;letter-spacing:-0.3px;">R$ 0,00</div>
<div class="t" style="left:948px;top:417.73750000000007px;width:95px;text-align:center;font-size:13.5px;font-weight:bold;color:#000;letter-spacing:-0.3px;">R$ 0,00</div>
<div class="t" style="left:1043px;top:417.73750000000007px;width:95px;text-align:center;font-size:13.5px;font-weight:bold;color:#000;letter-spacing:-0.3px;">R$ 0,00</div>
<div class="t" style="left:1138px;top:417.73750000000007px;width:95px;text-align:center;font-size:13.5px;font-weight:bold;color:#000;letter-spacing:-0.3px;">R$ 0,00</div>
<div class="t" style="left:1233px;top:417.73750000000007px;width:95px;text-align:center;font-size:13.5px;font-weight:bold;color:#000;letter-spacing:-0.3px;">R$ 0,00</div>
<div class="t" style="left:1328px;top:417.73750000000007px;width:95px;text-align:center;font-size:13.5px;font-weight:bold;color:#000;letter-spacing:-0.3px;">R$ 0,00</div>
<div class="t" style="left:1423px;top:417.73750000000007px;width:95px;text-align:center;font-size:13.5px;font-weight:bold;color:#000;letter-spacing:-0.3px;">R$ 4.000,00</div>
<div class="t" style="left:118px;top:451.07250000000005px;width:165px;text-align:center;font-size:13.5px;font-weight:bold;color:#000;letter-spacing:-0.55px;">Cliente 4</div>
<div class="t" style="left:283px;top:451.07250000000005px;width:95px;text-align:center;font-size:13.5px;font-weight:bold;color:#000;letter-spacing:-0.3px;">R$ 2.650,00</div>
<div class="t" style="left:378px;top:451.07250000000005px;width:95px;text-align:center;font-size:13.5px;font-weight:bold;color:#000;letter-spacing:-0.3px;">R$ 1.900,00</div>
<div class="t" style="left:473px;top:451.07250000000005px;width:95px;text-align:center;font-size:13.5px;font-weight:bold;color:#000;letter-spacing:-0.3px;">R$ 0,00</div>
<div class="t" style="left:568px;top:451.07250000000005px;width:95px;text-align:center;font-size:13.5px;font-weight:bold;color:#000;letter-spacing:-0.3px;">R$ 0,00</div>
<div class="t" style="left:663px;top:451.07250000000005px;width:95px;text-align:center;font-size:13.5px;font-weight:bold;color:#000;letter-spacing:-0.3px;">R$ 0,00</div>
<div class="t" style="left:758px;top:451.07250000000005px;width:95px;text-align:center;font-size:13.5px;font-weight:bold;color:#000;letter-spacing:-0.3px;">R$ 0,00</div>
<div class="t" style="left:853px;top:451.07250000000005px;width:95px;text-align:center;font-size:13.5px;font-weight:bold;color:#000;letter-spacing:-0.3px;">R$ 0,00</div>
<div class="t" style="left:948px;top:451.07250000000005px;width:95px;text-align:center;font-size:13.5px;font-weight:bold;color:#000;letter-spacing:-0.3px;">R$ 0,00</div>
<div class="t" style="left:1043px;top:451.07250000000005px;width:95px;text-align:center;font-size:13.5px;font-weight:bold;color:#000;letter-spacing:-0.3px;">R$ 0,00</div>
<div class="t" style="left:1138px;top:451.07250000000005px;width:95px;text-align:center;font-size:13.5px;font-weight:bold;color:#000;letter-spacing:-0.3px;">R$ 0,00</div>
<div class="t" style="left:1233px;top:451.07250000000005px;width:95px;text-align:center;font-size:13.5px;font-weight:bold;color:#000;letter-spacing:-0.3px;">R$ 0,00</div>
<div class="t" style="left:1328px;top:451.07250000000005px;width:95px;text-align:center;font-size:13.5px;font-weight:bold;color:#000;letter-spacing:-0.3px;">R$ 0,00</div>
<div class="t" style="left:1423px;top:451.07250000000005px;width:95px;text-align:center;font-size:13.5px;font-weight:bold;color:#000;letter-spacing:-0.3px;">R$ 4.550,00</div>
<div class="t" style="left:118px;top:484.4075000000001px;width:165px;text-align:center;font-size:13.5px;font-weight:bold;color:#000;letter-spacing:-0.55px;">Cliente 5</div>
<div class="t" style="left:283px;top:484.4075000000001px;width:95px;text-align:center;font-size:13.5px;font-weight:bold;color:#000;letter-spacing:-0.3px;">R$ 0,00</div>
<div class="t" style="left:378px;top:484.4075000000001px;width:95px;text-align:center;font-size:13.5px;font-weight:bold;color:#000;letter-spacing:-0.3px;">R$ 0,00</div>
<div class="t" style="left:473px;top:484.4075000000001px;width:95px;text-align:center;font-size:13.5px;font-weight:bold;color:#000;letter-spacing:-0.3px;">R$ 0,00</div>
<div class="t" style="left:568px;top:484.4075000000001px;width:95px;text-align:center;font-size:13.5px;font-weight:bold;color:#000;letter-spacing:-0.3px;">R$ 0,00</div>
<div class="t" style="left:663px;top:484.4075000000001px;width:95px;text-align:center;font-size:13.5px;font-weight:bold;color:#000;letter-spacing:-0.3px;">R$ 0,00</div>
<div class="t" style="left:758px;top:484.4075000000001px;width:95px;text-align:center;font-size:13.5px;font-weight:bold;color:#000;letter-spacing:-0.3px;">R$ 0,00</div>
<div class="t" style="left:853px;top:484.4075000000001px;width:95px;text-align:center;font-size:13.5px;font-weight:bold;color:#000;letter-spacing:-0.3px;">R$ 0,00</div>
<div class="t" style="left:948px;top:484.4075000000001px;width:95px;text-align:center;font-size:13.5px;font-weight:bold;color:#000;letter-spacing:-0.3px;">R$ 0,00</div>
<div class="t" style="left:1043px;top:484.4075000000001px;width:95px;text-align:center;font-size:13.5px;font-weight:bold;color:#000;letter-spacing:-0.3px;">R$ 0,00</div>
<div class="t" style="left:1138px;top:484.4075000000001px;width:95px;text-align:center;font-size:13.5px;font-weight:bold;color:#000;letter-spacing:-0.3px;">R$ 0,00</div>
<div class="t" style="left:1233px;top:484.4075000000001px;width:95px;text-align:center;font-size:13.5px;font-weight:bold;color:#000;letter-spacing:-0.3px;">R$ 0,00</div>
<div class="t" style="left:1328px;top:484.4075000000001px;width:95px;text-align:center;font-size:13.5px;font-weight:bold;color:#000;letter-spacing:-0.3px;">R$ 0,00</div>
<div class="t" style="left:1423px;top:484.4075000000001px;width:95px;text-align:center;font-size:13.5px;font-weight:bold;color:#000;letter-spacing:-0.3px;">R$ 0,00</div>
<div class="t" style="left:118px;top:517.7425px;width:165px;text-align:center;font-size:13.5px;font-weight:bold;color:#000;letter-spacing:-0.55px;">Cliente 6</div>
<div class="t" style="left:283px;top:517.7425px;width:95px;text-align:center;font-size:13.5px;font-weight:bold;color:#000;letter-spacing:-0.3px;">R$ 0,00</div>
<div class="t" style="left:378px;top:517.7425px;width:95px;text-align:center;font-size:13.5px;font-weight:bold;color:#000;letter-spacing:-0.3px;">R$ 0,00</div>
<div class="t" style="left:473px;top:517.7425px;width:95px;text-align:center;font-size:13.5px;font-weight:bold;color:#000;letter-spacing:-0.3px;">R$ 0,00</div>
<div class="t" style="left:568px;top:517.7425px;width:95px;text-align:center;font-size:13.5px;font-weight:bold;color:#000;letter-spacing:-0.3px;">R$ 0,00</div>
<div class="t" style="left:663px;top:517.7425px;width:95px;text-align:center;font-size:13.5px;font-weight:bold;color:#000;letter-spacing:-0.3px;">R$ 0,00</div>
<div class="t" style="left:758px;top:517.7425px;width:95px;text-align:center;font-size:13.5px;font-weight:bold;color:#000;letter-spacing:-0.3px;">R$ 0,00</div>
<div class="t" style="left:853px;top:517.7425px;width:95px;text-align:center;font-size:13.5px;font-weight:bold;color:#000;letter-spacing:-0.3px;">R$ 0,00</div>
<div class="t" style="left:948px;top:517.7425px;width:95px;text-align:center;font-size:13.5px;font-weight:bold;color:#000;letter-spacing:-0.3px;">R$ 0,00</div>
<div class="t" style="left:1043px;top:517.7425px;width:95px;text-align:center;font-size:13.5px;font-weight:bold;color:#000;letter-spacing:-0.3px;">R$ 0,00</div>
<div class="t" style="left:1138px;top:517.7425px;width:95px;text-align:center;font-size:13.5px;font-weight:bold;color:#000;letter-spacing:-0.3px;">R$ 0,00</div>
<div class="t" style="left:1233px;top:517.7425px;width:95px;text-align:center;font-size:13.5px;font-weight:bold;color:#000;letter-spacing:-0.3px;">R$ 0,00</div>
<div class="t" style="left:1328px;top:517.7425px;width:95px;text-align:center;font-size:13.5px;font-weight:bold;color:#000;letter-spacing:-0.3px;">R$ 0,00</div>
<div class="t" style="left:1423px;top:517.7425px;width:95px;text-align:center;font-size:13.5px;font-weight:bold;color:#000;letter-spacing:-0.3px;">R$ 0,00</div>
<div class="t" style="left:118px;top:551.0775px;width:165px;text-align:center;font-size:13.5px;font-weight:bold;color:#000;letter-spacing:-0.55px;">Cliente 7</div>
<div class="t" style="left:283px;top:551.0775px;width:95px;text-align:center;font-size:13.5px;font-weight:bold;color:#000;letter-spacing:-0.3px;">R$ 0,00</div>
<div class="t" style="left:378px;top:551.0775px;width:95px;text-align:center;font-size:13.5px;font-weight:bold;color:#000;letter-spacing:-0.3px;">R$ 0,00</div>
<div class="t" style="left:473px;top:551.0775px;width:95px;text-align:center;font-size:13.5px;font-weight:bold;color:#000;letter-spacing:-0.3px;">R$ 0,00</div>
<div class="t" style="left:568px;top:551.0775px;width:95px;text-align:center;font-size:13.5px;font-weight:bold;color:#000;letter-spacing:-0.3px;">R$ 0,00</div>
<div class="t" style="left:663px;top:551.0775px;width:95px;text-align:center;font-size:13.5px;font-weight:bold;color:#000;letter-spacing:-0.3px;">R$ 0,00</div>
<div class="t" style="left:758px;top:551.0775px;width:95px;text-align:center;font-size:13.5px;font-weight:bold;color:#000;letter-spacing:-0.3px;">R$ 0,00</div>
<div class="t" style="left:853px;top:551.0775px;width:95px;text-align:center;font-size:13.5px;font-weight:bold;color:#000;letter-spacing:-0.3px;">R$ 0,00</div>
<div class="t" style="left:948px;top:551.0775px;width:95px;text-align:center;font-size:13.5px;font-weight:bold;color:#000;letter-spacing:-0.3px;">R$ 0,00</div>
<div class="t" style="left:1043px;top:551.0775px;width:95px;text-align:center;font-size:13.5px;font-weight:bold;color:#000;letter-spacing:-0.3px;">R$ 0,00</div>
<div class="t" style="left:1138px;top:551.0775px;width:95px;text-align:center;font-size:13.5px;font-weight:bold;color:#000;letter-spacing:-0.3px;">R$ 0,00</div>
<div class="t" style="left:1233px;top:551.0775px;width:95px;text-align:center;font-size:13.5px;font-weight:bold;color:#000;letter-spacing:-0.3px;">R$ 0,00</div>
<div class="t" style="left:1328px;top:551.0775px;width:95px;text-align:center;font-size:13.5px;font-weight:bold;color:#000;letter-spacing:-0.3px;">R$ 0,00</div>
<div class="t" style="left:1423px;top:551.0775px;width:95px;text-align:center;font-size:13.5px;font-weight:bold;color:#000;letter-spacing:-0.3px;">R$ 0,00</div>
<div class="b" style="left:472.5px;top:605.78px;width:95.5px;height:33.835px;border:1.8px solid #2a5cb0"></div>
<div class="b" style="left:564.5px;top:636.115px;width:7.5px;height:7.5px;border-radius:50%;background:#0b57d0;border:1px solid #fff"></div>
<div class="b" style="left:1590px;top:208px;width:10px;height:601px;background:#fff"></div>
<div class="b" style="left:1590px;top:209px;width:10px;height:128px;background:#f8f9fa"></div>
<div class="b" style="left:1590px;top:208px;width:10px;height:1px;background:#c7c7c7"></div>
<div class="b" style="left:1590px;top:337px;width:10px;height:3px;background:#d5dae0"></div>
<div class="b" style="left:1591.8px;top:341px;width:7px;height:21px;background:#dadce0;border-radius:4px"></div>
<div class="b" style="left:1590px;top:782px;width:10px;height:27px;background:#fff;border-top:1px solid #e3e3e3"></div>
<div class="b" style="left:1592px;top:787px;width:0px;height:0px;border-left:3px solid transparent;border-right:3px solid transparent;border-bottom:3px solid #80868b"></div>
<div class="b" style="left:1592px;top:801px;width:0px;height:0px;border-left:3px solid transparent;border-right:3px solid transparent;border-top:3px solid #80868b"></div>
<div class="b" style="left:1589.5px;top:208px;width:1px;height:601px;background:#dadce0"></div>
<div class="b" style="left:0px;top:808.5px;width:1600px;height:11.5px;background:#fff;border-top:1px solid #dadce0"></div>
<div class="b" style="left:0px;top:809px;width:37.5px;height:11px;background:#f8f9fa"></div>
<div class="b" style="left:40.3px;top:810.6px;width:1025px;height:7.6px;background:#dadce0;border-radius:4px"></div>
<div class="b" style="left:1564px;top:809px;width:26px;height:11px;background:#fff;border-left:1px solid #e8e8e8"></div>
<div class="b" style="left:1577px;top:809px;width:1px;height:11px;background:#e8e8e8"></div>
<div class="b" style="left:1569px;top:812px;width:0px;height:0px;border-top:3px solid transparent;border-bottom:3px solid transparent;border-right:3px solid #80868b"></div>
<div class="b" style="left:1582px;top:812px;width:0px;height:0px;border-top:3px solid transparent;border-bottom:3px solid transparent;border-left:3px solid #80868b"></div>
<div class="b" style="left:0px;top:820px;width:1600px;height:30px;background:#f9fbfd;border-top:1px solid #e1e3e1"></div>
<svg style="position:absolute;left:44.7px;top:829.6px;width:14px;height:14px" viewBox="0 0 24 24"><path fill="#3c4043" d="M19 13h-6v6h-2v-6H5v-2h6V5h2v6h6v2z"/></svg>
<svg style="position:absolute;left:77.5px;top:829.2px;width:15px;height:15px" viewBox="0 0 24 24"><path fill="#3c4043" d="M3 18h18v-2H3v2zm0-5h18v-2H3v2zm0-7v2h18V6H3z"/></svg>
<div class="b" style="left:104px;top:827.5px;width:1px;height:16.5px;background:#c7c7c7"></div>
<div class="b" style="left:1005.6px;top:821px;width:75px;height:29px;background:#e1e9f7"></div>
<div class="t " style="left:122.4px;top:830.5px;font-size:12px;color:#444746;">Fev</div>
<svg style="position:absolute;left:148px;top:829px;width:15px;height:15px" viewBox="0 0 24 24"><path fill="#444746" d="M7 10l5 5 5-5z"/></svg>
<div class="t " style="left:179.6px;top:830.5px;font-size:12px;color:#444746;">Mar</div>
<svg style="position:absolute;left:207px;top:829px;width:15px;height:15px" viewBox="0 0 24 24"><path fill="#444746" d="M7 10l5 5 5-5z"/></svg>
<div class="t " style="left:238.5px;top:830.5px;font-size:12px;color:#444746;">Abr</div>
<svg style="position:absolute;left:265px;top:829px;width:15px;height:15px" viewBox="0 0 24 24"><path fill="#444746" d="M7 10l5 5 5-5z"/></svg>
<div class="t " style="left:296px;top:830.5px;font-size:12px;color:#444746;">Mai</div>
<svg style="position:absolute;left:322px;top:829px;width:15px;height:15px" viewBox="0 0 24 24"><path fill="#444746" d="M7 10l5 5 5-5z"/></svg>
<div class="t " style="left:353.6px;top:830.5px;font-size:12px;color:#444746;">Jun</div>
<svg style="position:absolute;left:379px;top:829px;width:15px;height:15px" viewBox="0 0 24 24"><path fill="#444746" d="M7 10l5 5 5-5z"/></svg>
<div class="t " style="left:411px;top:830.5px;font-size:12px;color:#444746;">Jul</div>
<svg style="position:absolute;left:434px;top:829px;width:15px;height:15px" viewBox="0 0 24 24"><path fill="#444746" d="M7 10l5 5 5-5z"/></svg>
<div class="t " style="left:464.5px;top:830.5px;font-size:12px;color:#444746;">Ago</div>
<svg style="position:absolute;left:493px;top:829px;width:15px;height:15px" viewBox="0 0 24 24"><path fill="#444746" d="M7 10l5 5 5-5z"/></svg>
<div class="t " style="left:524.5px;top:830.5px;font-size:12px;color:#444746;">Set</div>
<svg style="position:absolute;left:549px;top:829px;width:15px;height:15px" viewBox="0 0 24 24"><path fill="#444746" d="M7 10l5 5 5-5z"/></svg>
<div class="t " style="left:580px;top:830.5px;font-size:12px;color:#444746;">Out</div>
<svg style="position:absolute;left:608px;top:829px;width:15px;height:15px" viewBox="0 0 24 24"><path fill="#444746" d="M7 10l5 5 5-5z"/></svg>
<div class="t " style="left:638.5px;top:830.5px;font-size:12px;color:#444746;">Nov</div>
<svg style="position:absolute;left:666px;top:829px;width:15px;height:15px" viewBox="0 0 24 24"><path fill="#444746" d="M7 10l5 5 5-5z"/></svg>
<div class="t " style="left:697.7px;top:830.5px;font-size:12px;color:#444746;">Dez</div>
<svg style="position:absolute;left:724px;top:829px;width:15px;height:15px" viewBox="0 0 24 24"><path fill="#444746" d="M7 10l5 5 5-5z"/></svg>
<div class="t " style="left:756px;top:830.5px;font-size:12px;color:#444746;">Rel_Equip</div>
<svg style="position:absolute;left:818px;top:829px;width:15px;height:15px" viewBox="0 0 24 24"><path fill="#444746" d="M7 10l5 5 5-5z"/></svg>
<div class="t " style="left:849.5px;top:830.5px;font-size:12px;color:#444746;">Rel_Desp</div>
<svg style="position:absolute;left:908px;top:829px;width:15px;height:15px" viewBox="0 0 24 24"><path fill="#444746" d="M7 10l5 5 5-5z"/></svg>
<div class="t " style="left:939.5px;top:830.5px;font-size:12px;color:#444746;">Rel_FC</div>
<svg style="position:absolute;left:984px;top:829px;width:15px;height:15px" viewBox="0 0 24 24"><path fill="#444746" d="M7 10l5 5 5-5z"/></svg>
<div class="t " style="left:1015px;top:830.5px;font-size:12px;color:#0b57d0;-webkit-text-stroke:0.3px #0b57d0;">Rel_Cli</div>
<svg style="position:absolute;left:1060px;top:829px;width:15px;height:15px" viewBox="0 0 24 24"><path fill="#0b57d0" d="M7 10l5 5 5-5z"/></svg>
<div class="t " style="left:1091px;top:830.5px;font-size:12px;color:#444746;">An_Equip</div>
<svg style="position:absolute;left:1151px;top:829px;width:15px;height:15px" viewBox="0 0 24 24"><path fill="#444746" d="M7 10l5 5 5-5z"/></svg>
<div class="t " style="left:1182px;top:830.5px;font-size:12px;color:#444746;">Dash</div>
<svg style="position:absolute;left:1216px;top:829px;width:15px;height:15px" viewBox="0 0 24 24"><path fill="#444746" d="M7 10l5 5 5-5z"/></svg>
<div class="t " style="left:1248px;top:830.5px;font-size:12px;color:#444746;">Ini</div>
<svg style="position:absolute;left:1267px;top:829px;width:15px;height:15px" viewBox="0 0 24 24"><path fill="#444746" d="M7 10l5 5 5-5z"/></svg>
<div class="t " style="left:1298px;top:830.5px;font-size:12px;color:#444746;">Duv</div>
<svg style="position:absolute;left:1326px;top:829px;width:15px;height:15px" viewBox="0 0 24 24"><path fill="#444746" d="M7 10l5 5 5-5z"/></svg>
<div class="t " style="left:1357px;top:830.5px;font-size:12px;color:#444746;">Sug</div>
<svg style="position:absolute;left:1386px;top:829px;width:15px;height:15px" viewBox="0 0 24 24"><path fill="#444746" d="M7 10l5 5 5-5z"/></svg>
<svg style="position:absolute;left:1418px;top:828px;width:17px;height:17px" viewBox="0 0 24 24"><path fill="#444746" d="M15.41 7.41L14 6l-6 6 6 6 1.41-1.41L10.83 12z"/></svg>
<svg style="position:absolute;left:1451px;top:828px;width:17px;height:17px" viewBox="0 0 24 24"><path fill="#b0b3b8" d="M10 6L8.59 7.41 13.17 12l-4.58 4.59L10 18l6-6z"/></svg>
<svg style="position:absolute;left:1568px;top:828px;width:17px;height:17px" viewBox="0 0 24 24"><path fill="#444746" d="M15.41 7.41L14 6l-6 6 6 6 1.41-1.41L10.83 12z"/></svg>
</body></html>
